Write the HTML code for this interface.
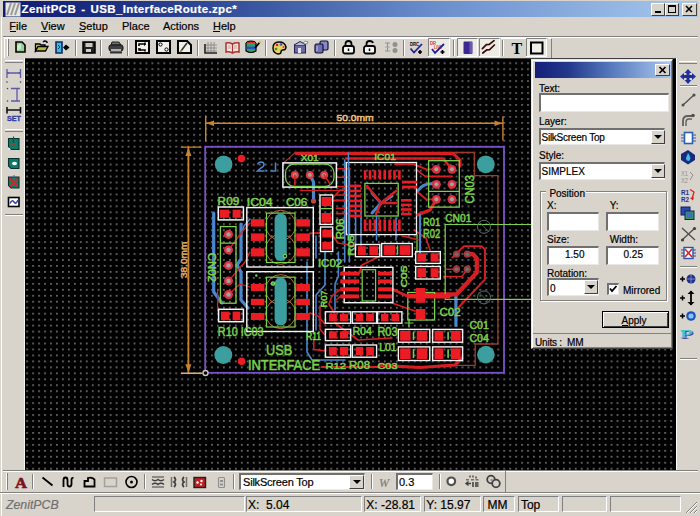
<!DOCTYPE html><html><head><meta charset="utf-8"><style>
*{margin:0;padding:0;box-sizing:border-box}
html,body{width:700px;height:516px;overflow:hidden;background:#d8d4cb;font-family:"Liberation Sans",sans-serif;position:relative}
.a{position:absolute}
.t{position:absolute;white-space:pre;line-height:1;-webkit-text-stroke:0.2px currentColor}
.sunk{position:absolute;border-top:1px solid #808080;border-left:1px solid #808080;border-bottom:1px solid #fff;border-right:1px solid #fff}
.inp{position:absolute;background:#fff;border-top:2px solid #707070;border-left:2px solid #707070;border-bottom:1px solid #e8e8e8;border-right:1px solid #e8e8e8}
.sep{position:absolute;width:2px;border-left:1px solid #808080;border-right:1px solid #fff}
.hsep{position:absolute;height:2px;border-top:1px solid #808080;border-bottom:1px solid #fff}
.dd{position:absolute;background:#d8d4cb;border-top:1px solid #fff;border-left:1px solid #fff;border-right:1px solid #404040;border-bottom:1px solid #404040}
.dd:after{content:"";position:absolute;left:50%;top:50%;margin-left:-4px;margin-top:-2px;border-left:4px solid transparent;border-right:4px solid transparent;border-top:4px solid #000}
.pressed{position:absolute;background:#e8e6e0;border-top:1px solid #808080;border-left:1px solid #808080;border-bottom:1px solid #fff;border-right:1px solid #fff}
</style></head><body>

<div class="a" style="left:3px;top:1px;width:695px;height:16px;background:linear-gradient(90deg,#101c74 0%,#1c2e82 15%,#3c5aa2 38%,#6a8ecc 62%,#a6c8ee 100%)"></div>
<svg class="a" style="left:5px;top:2px" width="16" height="15" viewBox="0 0 16 15"><rect x="0.5" y="0.5" width="15" height="14" fill="#e8e8e0"/><path d="M2 13 L6 1 M6 13 L10 1 M10 13 L14 1" stroke="#9a9a9a" stroke-width="2"/></svg>
<div class="t" style="left:21.5px;top:3px;font:bold 11.5px 'Liberation Sans';color:#fff;letter-spacing:0.37px;word-spacing:1.5px">ZenitPCB - USB_InterfaceRoute.zpc*</div>
<div class="a" style="left:651px;top:3px;width:14px;height:13px;background:#d8d4cb;border-top:1px solid #fff;border-left:1px solid #fff;border-right:1px solid #404040;border-bottom:1px solid #404040"></div>
<div class="a" style="left:665px;top:3px;width:14px;height:13px;background:#d8d4cb;border-top:1px solid #fff;border-left:1px solid #fff;border-right:1px solid #404040;border-bottom:1px solid #404040"></div>
<div class="a" style="left:682px;top:3px;width:15px;height:13px;background:#d8d4cb;border-top:1px solid #fff;border-left:1px solid #fff;border-right:1px solid #404040;border-bottom:1px solid #404040"></div>
<svg class="a" style="left:651px;top:3px" width="47" height="13"><rect x="4" y="8" width="6" height="2" fill="#000"/><rect x="17.5" y="2.5" width="7" height="7" fill="none" stroke="#000" stroke-width="1"/><rect x="17" y="2" width="8" height="2" fill="#000"/><path d="M35 3 L41 9 M41 3 L35 9" stroke="#000" stroke-width="1.6"/></svg>
<div class="t" style="left:9.3px;top:20.7px;font-size:11px;color:#000">File</div>
<div class="t" style="left:41px;top:20.7px;font-size:11px;color:#000">View</div>
<div class="t" style="left:79px;top:20.7px;font-size:11px;color:#000">Setup</div>
<div class="t" style="left:122px;top:20.7px;font-size:11px;color:#000">Place</div>
<div class="t" style="left:163px;top:20.7px;font-size:11px;color:#000">Actions</div>
<div class="t" style="left:213px;top:20.7px;font-size:11px;color:#000">Help</div>
<div class="a" style="left:9.5px;top:30.5px;width:6px;height:1px;background:#000"></div>
<div class="a" style="left:41px;top:30.5px;width:7px;height:1px;background:#000"></div>
<div class="a" style="left:79px;top:30.5px;width:6px;height:1px;background:#000"></div>
<div class="a" style="left:213px;top:30.5px;width:7px;height:1px;background:#000"></div>
<div class="hsep" style="left:3px;top:36px;width:695px"></div>
<div class="a" style="left:4px;top:38px;width:548px;height:20px;border-left:1px solid #fff;border-top:1px solid #fff;border-right:1px solid #808080"></div>
<div class="a" style="left:7px;top:39px;width:2px;height:17px;border-left:1px solid #fff;border-right:1px solid #808080"></div>
<div class="sep" style="left:74.5px;top:40px;height:16px"></div>
<div class="sep" style="left:100px;top:40px;height:16px"></div>
<div class="sep" style="left:127.30000000000001px;top:40px;height:16px"></div>
<div class="sep" style="left:196.8px;top:40px;height:16px"></div>
<div class="sep" style="left:265px;top:40px;height:16px"></div>
<div class="sep" style="left:333.9px;top:40px;height:16px"></div>
<div class="sep" style="left:402.5px;top:40px;height:16px"></div>
<div class="sep" style="left:452.7px;top:40px;height:16px"></div>
<div class="sep" style="left:501.9px;top:40px;height:16px"></div>
<div class="a" style="left:25px;top:58px;width:651px;height:412px;background:#000;overflow:hidden">
<svg width="651" height="412" style="position:absolute;left:0;top:0">
<defs><pattern id="g" patternUnits="userSpaceOnUse" x="7.200" y="4.300" width="5.963" height="5.963"><rect x="0.15" y="0.15" width="1.5" height="1.5" fill="#959595"/></pattern></defs>
<rect x="0" y="0" width="651" height="412" fill="url(#g)"/>
</svg></div>
<div class="a" style="left:25px;top:58px;width:651px;height:1px;background:#404040"></div>
<div class="a" style="left:25px;top:58px;width:651px;height:412px;overflow:hidden"><div style="position:absolute;left:-25px;top:-58px"><svg class="a" style="left:0;top:0" width="700" height="516" viewBox="0 0 700 516"><path d="M205.7 123.3 L502.9 123.3" fill="none" stroke="#c8842c" stroke-width="1.6" stroke-linejoin="round" stroke-linecap="round" /><path d="M205.7 116.0 L205.7 141.0" fill="none" stroke="#c8842c" stroke-width="1.4" stroke-linejoin="round" stroke-linecap="round" /><path d="M502.9 117.0 L502.9 140.0" fill="none" stroke="#c8842c" stroke-width="1.4" stroke-linejoin="round" stroke-linecap="round" /><path d="M206 123.3 L214 120.5 L214 126.1 Z" fill="#c8842c"/><path d="M502.5 123.3 L494.5 120.5 L494.5 126.1 Z" fill="#c8842c"/><text x="336.5" y="121.0" font-family="Liberation Sans" font-size="9.7" fill="#e8c080" stroke="#e8c080" stroke-width="0.5" textLength="37.0" lengthAdjust="spacingAndGlyphs">50.0mm</text><path d="M188.4 147.2 L188.4 373.0" fill="none" stroke="#c8842c" stroke-width="1.8" stroke-linejoin="round" stroke-linecap="round" /><path d="M181.4 147.1 L201.0 147.1" fill="none" stroke="#c8842c" stroke-width="1.4" stroke-linejoin="round" stroke-linecap="round" /><path d="M181.4 373.2 L202.0 373.2" fill="none" stroke="#e0b070" stroke-width="1.4" stroke-linejoin="round" stroke-linecap="round" /><path d="M188.4 147.5 L185.4 156 L191.4 156 Z" fill="#c8842c"/><path d="M188.4 372.8 L185.4 364.3 L191.4 364.3 Z" fill="#c8842c"/><text transform="translate(186.5 278.1) rotate(-90)" x="0" y="0" font-family="Liberation Sans" font-size="9.0" fill="#e0a860" stroke="#e0a860" stroke-width="0.5" textLength="36.4" lengthAdjust="spacingAndGlyphs">38.0mm</text><rect x="205.2" y="146.8" width="298.8" height="226.0" fill="none" stroke="#7a52c8" stroke-width="1.8" /><circle cx="205.5" cy="373.0" r="3.2" fill="#c8c8c0"/><circle cx="205.5" cy="373.0" r="1.8" fill="#000"/><path d="M296.0 152.5 L474.3 152.5 L474.3 175.7 L497.9 175.7 L497.9 344.0 L475.2 344.0 L475.2 365.3 L440.0 365.3" fill="none" stroke="#9a3c2c" stroke-width="1.3" stroke-linejoin="round" stroke-linecap="round" /><path d="M283.6 162.9 L295.7 152.1" fill="none" stroke="#9a3c2c" stroke-width="1.2" stroke-linejoin="round" stroke-linecap="round" /><circle cx="223.6" cy="164.3" r="8.8" fill="#3c9e9e"/><circle cx="485.8" cy="164.3" r="8.9" fill="#3c9e9e"/><circle cx="223.3" cy="355.0" r="9.0" fill="#3c9e9e"/><circle cx="485.9" cy="354.6" r="8.8" fill="#3c9e9e"/><circle cx="241.4" cy="158.6" r="3.8" fill="#ec1c24"/><circle cx="241.6" cy="361.2" r="3.8" fill="#ec1c24"/><path d="M257.5 164.5 Q258.5 162 261 162 Q264 162 264 164.5 Q264 166.5 261 168 L257.5 171 H264.5 M270.5 171 H275.5 V162.5" fill="none" stroke="#4a86cc" stroke-width="1.5"/><circle cx="266.5" cy="170.8" r="1.0" fill="#4a86cc"/><path d="M213.7 213.0 L213.7 292.0 L222.0 303.0" fill="none" stroke="#4a86cc" stroke-width="3.2" stroke-linejoin="round" stroke-linecap="round" /><path d="M241.0 224.0 L241.0 259.0 L237.0 265.0 L241.0 272.0 L241.0 300.0 L248.0 308.0" fill="none" stroke="#4a86cc" stroke-width="3.2" stroke-linejoin="round" stroke-linecap="round" /><path d="M309.9 174.9 L313.5 182.0 L313.5 201.0" fill="none" stroke="#4a86cc" stroke-width="3.2" stroke-linejoin="round" stroke-linecap="round" /><path d="M307.0 262.0 L307.0 352.0 L312.0 360.0 L345.0 360.0" fill="none" stroke="#4a86cc" stroke-width="1.6" stroke-linejoin="round" stroke-linecap="round" /><path d="M344.7 160.0 L344.7 262.0" fill="none" stroke="#4a86cc" stroke-width="1.6" stroke-linejoin="round" stroke-linecap="round" /><path d="M349.4 168.0 L349.4 262.0" fill="none" stroke="#4a86cc" stroke-width="1.6" stroke-linejoin="round" stroke-linecap="round" /><path d="M355.6 185.0 L355.6 250.0" fill="none" stroke="#4a86cc" stroke-width="1.6" stroke-linejoin="round" stroke-linecap="round" /><path d="M361.0 200.0 L361.0 245.0" fill="none" stroke="#4a86cc" stroke-width="1.6" stroke-linejoin="round" stroke-linecap="round" /><path d="M372.0 193.0 L381.0 203.0 L372.0 213.0" fill="none" stroke="#4a86cc" stroke-width="3" stroke-linejoin="round" stroke-linecap="round" /><path d="M381.0 203.0 L392.0 196.0" fill="none" stroke="#4a86cc" stroke-width="3" stroke-linejoin="round" stroke-linecap="round" /><path d="M396.0 218.0 L396.0 240.0" fill="none" stroke="#4a86cc" stroke-width="1.6" stroke-linejoin="round" stroke-linecap="round" /><path d="M455.9 294.5 L455.9 325.5" fill="none" stroke="#4a86cc" stroke-width="3.2" stroke-linejoin="round" stroke-linecap="round" /><path d="M316.0 236.0 L316.0 258.0" fill="none" stroke="#4a86cc" stroke-width="1.6" stroke-linejoin="round" stroke-linecap="round" /><path d="M325.0 252.0 L325.0 285.0 L316.0 295.0 L316.0 330.0" fill="none" stroke="#4a86cc" stroke-width="1.6" stroke-linejoin="round" stroke-linecap="round" /><path d="M338.4 252.0 L338.4 276.0 L335.0 284.0 L335.0 310.0" fill="none" stroke="#4a86cc" stroke-width="1.6" stroke-linejoin="round" stroke-linecap="round" /><path d="M241.0 235.0 L244.0 226.0 L250.0 219.0" fill="none" stroke="#4a86cc" stroke-width="1.6" stroke-linejoin="round" stroke-linecap="round" /><path d="M296.0 153.4 L452.9 153.4 L460.0 160.0 L460.0 166.0" fill="none" stroke="#d81e22" stroke-width="3.0" stroke-linejoin="round" stroke-linecap="round" /><path d="M395.0 164.2 L413.6 164.2 L426.4 169.4 L436.4 169.3" fill="none" stroke="#d81e22" stroke-width="1.8" stroke-linejoin="round" stroke-linecap="round" /><path d="M416.0 169.4 L425.2 176.4 L452.0 176.4" fill="none" stroke="#d81e22" stroke-width="1.8" stroke-linejoin="round" stroke-linecap="round" /><path d="M417.0 191.5 L426.0 199.3 L436.4 199.3" fill="none" stroke="#d81e22" stroke-width="1.8" stroke-linejoin="round" stroke-linecap="round" /><path d="M418.3 190.3 Q424 182 436.4 184.3" fill="none" stroke="#4a86cc" stroke-width="3" stroke-linecap="round"/><path d="M346.0 158.4 L443.0 158.4 L451.9 169.3" fill="none" stroke="#d81e22" stroke-width="2.5" stroke-linejoin="round" stroke-linecap="round" /><path d="M336.5 168.7 L350.0 168.7" fill="none" stroke="#d81e22" stroke-width="1.6" stroke-linejoin="round" stroke-linecap="round" /><path d="M336.5 177.2 L350.0 177.2" fill="none" stroke="#d81e22" stroke-width="1.6" stroke-linejoin="round" stroke-linecap="round" /><path d="M336.5 186.5 L350.0 186.5" fill="none" stroke="#d81e22" stroke-width="1.6" stroke-linejoin="round" stroke-linecap="round" /><path d="M336.5 195.0 L350.0 195.0" fill="none" stroke="#d81e22" stroke-width="1.6" stroke-linejoin="round" stroke-linecap="round" /><path d="M336.5 208.2 L350.0 208.2" fill="none" stroke="#d81e22" stroke-width="1.6" stroke-linejoin="round" stroke-linecap="round" /><path d="M336.5 213.6 L350.0 213.6" fill="none" stroke="#d81e22" stroke-width="1.6" stroke-linejoin="round" stroke-linecap="round" /><path d="M228.5 249.9 L242.0 232.0 L250.0 223.0" fill="none" stroke="#d81e22" stroke-width="1.3" stroke-linejoin="round" stroke-linecap="round" /><path d="M228.5 280.9 L245.0 262.0 L250.0 252.0" fill="none" stroke="#d81e22" stroke-width="1.3" stroke-linejoin="round" stroke-linecap="round" /><path d="M228.5 294.5 L240.0 284.0 L250.0 287.0" fill="none" stroke="#d81e22" stroke-width="1.3" stroke-linejoin="round" stroke-linecap="round" /><path d="M217.6 290.0 L217.6 311.0" fill="none" stroke="#d81e22" stroke-width="1.3" stroke-linejoin="round" stroke-linecap="round" /><path d="M325.0 206.0 L340.0 190.0 L346.0 190.0" fill="none" stroke="#d81e22" stroke-width="1.6" stroke-linejoin="round" stroke-linecap="round" /><path d="M331.0 233.0 L338.0 243.0 L355.0 246.0" fill="none" stroke="#d81e22" stroke-width="1.6" stroke-linejoin="round" stroke-linecap="round" /><path d="M309.9 233.4 L320.0 233.0" fill="none" stroke="#d81e22" stroke-width="1.8" stroke-linejoin="round" stroke-linecap="round" /><path d="M340.0 289.3 L332.0 296.0 L329.0 304.0 L336.0 316.0" fill="none" stroke="#d81e22" stroke-width="1.6" stroke-linejoin="round" stroke-linecap="round" /><path d="M340.0 296.4 L336.0 300.0" fill="none" stroke="#d81e22" stroke-width="1.4" stroke-linejoin="round" stroke-linecap="round" /><path d="M309.9 313.0 L318.0 316.0 L325.0 324.0" fill="none" stroke="#d81e22" stroke-width="1.6" stroke-linejoin="round" stroke-linecap="round" /><path d="M359.0 273.6 L362.0 265.0 L380.0 256.0" fill="none" stroke="#d81e22" stroke-width="1.8" stroke-linejoin="round" stroke-linecap="round" /><path d="M392.0 289.0 L408.6 296.8 L426.0 296.3 L456.5 294.3" fill="none" stroke="#d81e22" stroke-width="2.6" stroke-linejoin="round" stroke-linecap="round" /><path d="M467.3 254.2 L473.0 254.2 L476.8 258.5 L476.8 272.6 L456.5 294.3 L426.0 294.3" fill="none" stroke="#d81e22" stroke-width="4.2" stroke-linejoin="round" stroke-linecap="round" /><path d="M452.4 257.6 L464.0 246.1 L481.6 246.1 L485.0 249.5 L485.0 279.3 L457.0 309.0" fill="none" stroke="#d81e22" stroke-width="1.9" stroke-linejoin="round" stroke-linecap="round" /><path d="M456.5 269.2 L446.3 269.2" fill="none" stroke="#d81e22" stroke-width="1.5" stroke-linejoin="round" stroke-linecap="round" /><path d="M467.3 269.2 L461.9 276.6 L443.6 276.6" fill="none" stroke="#d81e22" stroke-width="1.5" stroke-linejoin="round" stroke-linecap="round" /><path d="M380.0 365.3 L420.0 367.5 L455.0 365.0 L462.0 358.0" fill="none" stroke="#d81e22" stroke-width="3.2" stroke-linejoin="round" stroke-linecap="round" /><path d="M320.0 305.8 L320.0 329.0 L325.0 335.0" fill="none" stroke="#d81e22" stroke-width="1.5" stroke-linejoin="round" stroke-linecap="round" /><path d="M313.8 339.0 L313.8 349.4 L326.0 351.0" fill="none" stroke="#d81e22" stroke-width="1.5" stroke-linejoin="round" stroke-linecap="round" /><path d="M335.0 323.0 L358.0 340.0 L392.0 338.0" fill="none" stroke="#d81e22" stroke-width="1.6" stroke-linejoin="round" stroke-linecap="round" /><path d="M321.8 367.0 L380.0 367.0" fill="none" stroke="#d81e22" stroke-width="2.2" stroke-linejoin="round" stroke-linecap="round" /><path d="M392.0 303.0 L415.0 311.0" fill="none" stroke="#d81e22" stroke-width="1.6" stroke-linejoin="round" stroke-linecap="round" /><path d="M430.0 250.0 L426.0 238.0 L414.0 230.0" fill="none" stroke="#d81e22" stroke-width="1.6" stroke-linejoin="round" stroke-linecap="round" /><text x="300.7" y="160.7" font-family="Liberation Sans" font-size="9.9" fill="#7cd04c" stroke="#7cd04c" stroke-width="0.5" textLength="17.9" lengthAdjust="spacingAndGlyphs">X01</text><rect x="282.9" y="162.9" width="53.5" height="24.2" fill="none" stroke="#f4f4f4" stroke-width="1.5" /><rect x="285.5" y="164" width="48.5" height="22.5" rx="9" fill="none" stroke="#7cd04c" stroke-width="1.3"/><circle cx="294.9" cy="174.9" r="4.0" fill="#e03840"/><circle cx="294.9" cy="174.9" r="1.9" fill="#9aa4a4"/><circle cx="309.9" cy="174.9" r="4.0" fill="#e03840"/><circle cx="309.9" cy="174.9" r="1.9" fill="#9aa4a4"/><circle cx="324.1" cy="174.9" r="4.0" fill="#e03840"/><circle cx="324.1" cy="174.9" r="1.9" fill="#9aa4a4"/><path d="M294.9 174.9 L294.9 185.0" fill="none" stroke="#d81e22" stroke-width="1.5" stroke-linejoin="round" stroke-linecap="round" /><path d="M324.1 174.9 L330.0 184.0" fill="none" stroke="#d81e22" stroke-width="1.5" stroke-linejoin="round" stroke-linecap="round" /><path d="M300.0 190.5 L350.0 190.5" fill="none" stroke="#d81e22" stroke-width="1.2" stroke-linejoin="round" stroke-linecap="round" /><path d="M332.0 200.6 L350.0 200.6" fill="none" stroke="#d81e22" stroke-width="2" stroke-linejoin="round" stroke-linecap="round" /><circle cx="313.5" cy="201.0" r="2.6" fill="#d04040"/><text x="374.2" y="160.2" font-family="Liberation Sans" font-size="9.7" fill="#7cd04c" stroke="#7cd04c" stroke-width="0.5" textLength="21.7" lengthAdjust="spacingAndGlyphs">IC01</text><rect x="346.3" y="162.5" width="70.2" height="72.1" fill="none" stroke="#f4f4f4" stroke-width="1.3" /><rect x="364.9" y="183.4" width="33.3" height="32.6" fill="none" stroke="#7cd04c" stroke-width="1.3" /><rect x="363.8" y="170.2" width="2.6" height="9.3" fill="#ec1c24"/><rect x="363.8" y="219.5" width="2.6" height="11.5" fill="#ec1c24"/><rect x="368.7" y="170.2" width="2.6" height="9.3" fill="#ec1c24"/><rect x="368.7" y="219.5" width="2.6" height="11.5" fill="#ec1c24"/><rect x="373.6" y="170.2" width="2.6" height="9.3" fill="#ec1c24"/><rect x="373.6" y="219.5" width="2.6" height="11.5" fill="#ec1c24"/><rect x="378.5" y="170.2" width="2.6" height="9.3" fill="#ec1c24"/><rect x="378.5" y="219.5" width="2.6" height="11.5" fill="#ec1c24"/><rect x="383.4" y="170.2" width="2.6" height="9.3" fill="#ec1c24"/><rect x="383.4" y="219.5" width="2.6" height="11.5" fill="#ec1c24"/><rect x="388.3" y="170.2" width="2.6" height="9.3" fill="#ec1c24"/><rect x="388.3" y="219.5" width="2.6" height="11.5" fill="#ec1c24"/><rect x="393.2" y="170.2" width="2.6" height="9.3" fill="#ec1c24"/><rect x="393.2" y="219.5" width="2.6" height="11.5" fill="#ec1c24"/><rect x="398.1" y="170.2" width="2.6" height="9.3" fill="#ec1c24"/><rect x="398.1" y="219.5" width="2.6" height="11.5" fill="#ec1c24"/><rect x="350.0" y="184.6" width="11.0" height="2.6" fill="#ec1c24"/><rect x="350.0" y="189.6" width="11.0" height="2.6" fill="#ec1c24"/><rect x="350.0" y="194.6" width="11.0" height="2.6" fill="#ec1c24"/><rect x="350.0" y="199.6" width="11.0" height="2.6" fill="#ec1c24"/><rect x="350.0" y="204.6" width="11.0" height="2.6" fill="#ec1c24"/><rect x="350.0" y="209.6" width="11.0" height="2.6" fill="#ec1c24"/><rect x="350.0" y="214.6" width="11.0" height="2.6" fill="#ec1c24"/><rect x="402.0" y="180.7" width="15.0" height="2.7" fill="#ec1c24"/><rect x="402.0" y="185.6" width="15.0" height="2.8" fill="#ec1c24"/><rect x="401.0" y="199.0" width="10.7" height="2.6" fill="#ec1c24"/><rect x="401.0" y="203.6" width="10.7" height="2.6" fill="#ec1c24"/><rect x="401.0" y="208.2" width="10.7" height="2.6" fill="#ec1c24"/><rect x="401.0" y="212.8" width="10.7" height="2.6" fill="#ec1c24"/><path d="M348.4 153.0 L348.4 240.0" fill="none" stroke="#4a86cc" stroke-width="1.6" stroke-linejoin="round" stroke-linecap="round" /><path d="M376.5 215.0 L376.5 240.0" fill="none" stroke="#4a86cc" stroke-width="1.6" stroke-linejoin="round" stroke-linecap="round" /><path d="M418.0 214.8 L430.0 210.0 L436.4 199.3" fill="none" stroke="#d81e22" stroke-width="3.2" stroke-linejoin="round" stroke-linecap="round" /><path d="M420.0 215.0 L420.0 255.0" fill="none" stroke="#4a86cc" stroke-width="2.2" stroke-linejoin="round" stroke-linecap="round" /><path d="M417.0 235.0 L417.0 252.0" fill="none" stroke="#7cd04c" stroke-width="1.3" stroke-linejoin="round" stroke-linecap="round" /><path d="M402.0 235.7 L418.0 239.8" fill="none" stroke="#d81e22" stroke-width="1.5" stroke-linejoin="round" stroke-linecap="round" /><path d="M367.0 186.0 L381.0 203.0 L396.0 191.0" fill="none" stroke="#d81e22" stroke-width="2.4" stroke-linejoin="round" stroke-linecap="round" /><path d="M381.0 203.0 L396.0 203.0" fill="none" stroke="#d81e22" stroke-width="2.4" stroke-linejoin="round" stroke-linecap="round" /><path d="M381.0 203.0 L376.0 214.0" fill="none" stroke="#d81e22" stroke-width="2.4" stroke-linejoin="round" stroke-linecap="round" /><rect x="428.6" y="160.7" width="30.7" height="46.4" fill="none" stroke="#7cd04c" stroke-width="1.3" /><path d="M428.6 191.4 L459.3 191.4" fill="none" stroke="#7cd04c" stroke-width="1.3" stroke-linejoin="round" stroke-linecap="round" /><circle cx="436.4" cy="169.3" r="4.4" fill="#e03040"/><circle cx="436.4" cy="169.3" r="2.0" fill="#9aa4a4"/><circle cx="436.4" cy="184.3" r="4.4" fill="#e03040"/><circle cx="436.4" cy="184.3" r="2.0" fill="#9aa4a4"/><circle cx="436.4" cy="199.3" r="4.4" fill="#e03040"/><circle cx="436.4" cy="199.3" r="2.0" fill="#9aa4a4"/><circle cx="451.9" cy="169.3" r="4.4" fill="#e03040"/><circle cx="451.9" cy="169.3" r="2.0" fill="#9aa4a4"/><circle cx="451.9" cy="184.3" r="4.4" fill="#e03040"/><circle cx="451.9" cy="184.3" r="2.0" fill="#9aa4a4"/><circle cx="451.9" cy="199.3" r="4.4" fill="#e03040"/><circle cx="451.9" cy="199.3" r="2.0" fill="#9aa4a4"/><text transform="translate(473.6 203.6) rotate(-90)" x="0" y="0" font-family="Liberation Sans" font-size="11.9" fill="#7cd04c" stroke="#7cd04c" stroke-width="0.5" textLength="28.6" lengthAdjust="spacingAndGlyphs">CN03</text><text x="445.2" y="222.0" font-family="Liberation Sans" font-size="10.8" fill="#7cd04c" stroke="#7cd04c" stroke-width="0.5" textLength="26.2" lengthAdjust="spacingAndGlyphs">CN01</text><path d="M540.0 224.5 L445.2 224.5 L445.2 299.4 L540.0 299.4" fill="none" stroke="#7cd04c" stroke-width="1.2" stroke-linejoin="round" stroke-linecap="round" /><circle cx="484" cy="226.8" r="6.5" fill="none" stroke="#5a6e6e" stroke-width="1"/><path d="M479.0 221.8 L489.0 231.8" fill="none" stroke="#5a6e6e" stroke-width="0.8" stroke-linejoin="round" stroke-linecap="round" /><circle cx="484" cy="297.4" r="6.5" fill="none" stroke="#5a6e6e" stroke-width="1"/><path d="M479.0 292.4 L489.0 302.4" fill="none" stroke="#5a6e6e" stroke-width="0.8" stroke-linejoin="round" stroke-linecap="round" /><circle cx="456.5" cy="254.2" r="3.6" fill="#a03838"/><circle cx="456.5" cy="254.2" r="1.8" fill="#6a7070"/><circle cx="456.5" cy="269.2" r="3.6" fill="#a03838"/><circle cx="456.5" cy="269.2" r="1.8" fill="#6a7070"/><circle cx="467.3" cy="254.2" r="3.6" fill="#a03838"/><circle cx="467.3" cy="254.2" r="1.8" fill="#6a7070"/><circle cx="467.3" cy="269.2" r="3.6" fill="#a03838"/><circle cx="467.3" cy="269.2" r="1.8" fill="#6a7070"/><text x="423.0" y="225.9" font-family="Liberation Sans" font-size="11.0" fill="#7cd04c" stroke="#7cd04c" stroke-width="0.5" textLength="17.3" lengthAdjust="spacingAndGlyphs">R01</text><text x="423.0" y="238.4" font-family="Liberation Sans" font-size="12.1" fill="#7cd04c" stroke="#7cd04c" stroke-width="0.5" textLength="17.3" lengthAdjust="spacingAndGlyphs">R02</text><rect x="320.0" y="195.0" width="12.7" height="29.4" fill="none" stroke="#f4f4f4" stroke-width="1.4" /><rect x="321.5" y="197.0" width="10.0" height="9.0" fill="#ec1c24"/><rect x="321.5" y="213.0" width="10.0" height="9.7" fill="#ec1c24"/><path d="M321.0 208.7 L332.0 208.7" fill="none" stroke="#7cd04c" stroke-width="1.2" stroke-linejoin="round" stroke-linecap="round" /><rect x="320.5" y="227.0" width="12.2" height="24.5" fill="none" stroke="#f4f4f4" stroke-width="1.4" /><rect x="322.2" y="229.7" width="9.6" height="7.8" fill="#ec1c24"/><rect x="322.2" y="241.9" width="9.6" height="7.8" fill="#ec1c24"/><text transform="translate(344.0 239.3) rotate(-90)" x="0" y="0" font-family="Liberation Sans" font-size="11.1" fill="#7cd04c" stroke="#7cd04c" stroke-width="0.5" textLength="21.0" lengthAdjust="spacingAndGlyphs">R06</text><text x="317.9" y="267.2" font-family="Liberation Sans" font-size="11.0" fill="#7cd04c" stroke="#7cd04c" stroke-width="0.5" textLength="24.4" lengthAdjust="spacingAndGlyphs">IC02</text><text transform="translate(353.6 255.8) rotate(-90)" x="0" y="0" font-family="Liberation Sans" font-size="8.5" fill="#7cd04c" stroke="#7cd04c" stroke-width="0.5" textLength="20.9" lengthAdjust="spacingAndGlyphs">R05</text><text transform="translate(406.5 287.5) rotate(-90)" x="0" y="0" font-family="Liberation Sans" font-size="8.3" fill="#7cd04c" stroke="#7cd04c" stroke-width="0.5" textLength="21.8" lengthAdjust="spacingAndGlyphs">C05</text><rect x="355.4" y="244.5" width="24.4" height="12.2" fill="none" stroke="#f4f4f4" stroke-width="1.4" /><rect x="358.0" y="246.2" width="7.8" height="8.8" fill="#ec1c24"/><rect x="369.3" y="246.2" width="8.7" height="8.8" fill="#ec1c24"/><rect x="381.6" y="243.5" width="30.7" height="13.1" fill="none" stroke="#f4f4f4" stroke-width="1.4" /><rect x="383.6" y="245.2" width="11.9" height="9.7" fill="#ec1c24"/><rect x="399.5" y="245.2" width="11.0" height="9.7" fill="#ec1c24"/><path d="M397.5 246.0 L397.5 254.0" fill="none" stroke="#7cd04c" stroke-width="1.5" stroke-linejoin="round" stroke-linecap="round" /><rect x="415.7" y="251.6" width="24.6" height="11.8" fill="none" stroke="#f4f4f4" stroke-width="1.4" /><rect x="417.3" y="253.3" width="8.7" height="8.4" fill="#ec1c24"/><rect x="430.6" y="253.3" width="7.9" height="8.4" fill="#ec1c24"/><rect x="415.7" y="266.5" width="24.6" height="12.5" fill="none" stroke="#f4f4f4" stroke-width="1.4" /><rect x="417.3" y="268.2" width="8.7" height="9.1" fill="#ec1c24"/><rect x="430.6" y="268.2" width="7.9" height="9.1" fill="#ec1c24"/><rect x="344.2" y="267.3" width="48.7" height="35.4" fill="none" stroke="#f4f4f4" stroke-width="1.4" /><rect x="340.2" y="271.6" width="18.8" height="4.0" fill="#ec1c24"/><rect x="378.0" y="271.6" width="14.0" height="4.0" fill="#ec1c24"/><rect x="340.2" y="279.4" width="18.8" height="4.0" fill="#ec1c24"/><rect x="378.0" y="279.4" width="14.0" height="4.0" fill="#ec1c24"/><rect x="340.2" y="287.3" width="18.8" height="4.0" fill="#ec1c24"/><rect x="378.0" y="287.3" width="14.0" height="4.0" fill="#ec1c24"/><rect x="340.2" y="294.4" width="18.8" height="4.0" fill="#ec1c24"/><rect x="378.0" y="294.4" width="14.0" height="4.0" fill="#ec1c24"/><rect x="362.2" y="269.7" width="13.4" height="31.3" fill="none" stroke="#7cd04c" stroke-width="1.2" /><rect x="407.8" y="292.5" width="26.8" height="27.5" fill="none" stroke="#7cd04c" stroke-width="1.3" /><rect x="415.7" y="288.0" width="9.7" height="14.8" fill="#ec1c24"/><rect x="407.0" y="294.0" width="43.0" height="4.5" fill="#ec1c24"/><rect x="415.7" y="309.0" width="9.7" height="10.4" fill="#ec1c24"/><path d="M405.0 323.0 L413.0 323.0" fill="none" stroke="#7cd04c" stroke-width="1.2" stroke-linejoin="round" stroke-linecap="round" /><path d="M409.0 319.0 L409.0 327.0" fill="none" stroke="#7cd04c" stroke-width="1.2" stroke-linejoin="round" stroke-linecap="round" /><text x="439.4" y="315.9" font-family="Liberation Sans" font-size="11.0" fill="#7cd04c" stroke="#7cd04c" stroke-width="0.5" textLength="21.3" lengthAdjust="spacingAndGlyphs">C02</text><rect x="325.4" y="311.8" width="25.3" height="11.4" fill="none" stroke="#f4f4f4" stroke-width="1.4" /><rect x="328.9" y="313.8" width="7.9" height="7.4" fill="#ec1c24"/><rect x="339.8" y="313.8" width="8.2" height="7.4" fill="#ec1c24"/><rect x="352.4" y="311.8" width="24.2" height="11.4" fill="none" stroke="#f4f4f4" stroke-width="1.4" /><rect x="355.9" y="313.8" width="7.4" height="7.4" fill="#ec1c24"/><rect x="366.2" y="313.8" width="7.7" height="7.4" fill="#ec1c24"/><rect x="377.5" y="311.8" width="24.4" height="11.4" fill="none" stroke="#f4f4f4" stroke-width="1.4" /><rect x="381.0" y="313.8" width="7.5" height="7.4" fill="#ec1c24"/><rect x="391.4" y="313.8" width="7.8" height="7.4" fill="#ec1c24"/><rect x="325.4" y="329.3" width="25.3" height="11.3" fill="none" stroke="#f4f4f4" stroke-width="1.4" /><rect x="328.9" y="331.3" width="7.9" height="7.3" fill="#ec1c24"/><rect x="339.8" y="331.3" width="8.2" height="7.3" fill="#ec1c24"/><rect x="325.4" y="345.0" width="25.3" height="12.2" fill="none" stroke="#f4f4f4" stroke-width="1.4" /><rect x="328.9" y="347.0" width="7.9" height="8.2" fill="#ec1c24"/><rect x="339.8" y="347.0" width="8.2" height="8.2" fill="#ec1c24"/><rect x="352.4" y="345.0" width="24.2" height="12.2" fill="none" stroke="#f4f4f4" stroke-width="1.4" /><rect x="355.9" y="347.0" width="7.4" height="8.2" fill="#ec1c24"/><rect x="366.2" y="347.0" width="7.7" height="8.2" fill="#ec1c24"/><text x="306.0" y="339.7" font-family="Liberation Sans" font-size="10.8" fill="#7cd04c" stroke="#7cd04c" stroke-width="0.5" textLength="15.0" lengthAdjust="spacingAndGlyphs">R11</text><text transform="translate(327.0 307.6) rotate(-90)" x="0" y="0" font-family="Liberation Sans" font-size="9.0" fill="#7cd04c" stroke="#7cd04c" stroke-width="0.5" textLength="17.1" lengthAdjust="spacingAndGlyphs">R07</text><text x="352.4" y="335.4" font-family="Liberation Sans" font-size="11.0" fill="#7cd04c" stroke="#7cd04c" stroke-width="0.5" textLength="19.6" lengthAdjust="spacingAndGlyphs">R04</text><text x="377.5" y="336.2" font-family="Liberation Sans" font-size="12.1" fill="#7cd04c" stroke="#7cd04c" stroke-width="0.5" textLength="20.0" lengthAdjust="spacingAndGlyphs">R03</text><text x="379.2" y="351.0" font-family="Liberation Sans" font-size="10.8" fill="#7cd04c" stroke="#7cd04c" stroke-width="0.5" textLength="17.4" lengthAdjust="spacingAndGlyphs">L01</text><text x="325.4" y="368.5" font-family="Liberation Sans" font-size="9.7" fill="#7cd04c" stroke="#7cd04c" stroke-width="0.5" textLength="20.6" lengthAdjust="spacingAndGlyphs">R12</text><text x="349.0" y="368.5" font-family="Liberation Sans" font-size="10.8" fill="#7cd04c" stroke="#7cd04c" stroke-width="0.5" textLength="21.0" lengthAdjust="spacingAndGlyphs">R08</text><text x="377.5" y="369.4" font-family="Liberation Sans" font-size="8.5" fill="#7cd04c" stroke="#7cd04c" stroke-width="0.5" textLength="20.0" lengthAdjust="spacingAndGlyphs">C03</text><rect x="398.4" y="329.4" width="31.4" height="12.8" fill="none" stroke="#f4f4f4" stroke-width="1.4" /><rect x="400.1" y="330.9" width="10.5" height="9.8" fill="#ec1c24"/><rect x="416.7" y="330.9" width="10.5" height="9.8" fill="#ec1c24"/><path d="M413.5 332.4 L413.5 339.2" fill="none" stroke="#7cd04c" stroke-width="1.6" stroke-linejoin="round" stroke-linecap="round" /><rect x="432.6" y="329.4" width="30.0" height="12.8" fill="none" stroke="#f4f4f4" stroke-width="1.4" /><rect x="434.5" y="330.9" width="8.8" height="9.8" fill="#ec1c24"/><rect x="451.0" y="330.9" width="9.7" height="9.8" fill="#ec1c24"/><path d="M448.1 332.4 L448.1 339.2" fill="none" stroke="#7cd04c" stroke-width="1.6" stroke-linejoin="round" stroke-linecap="round" /><rect x="398.4" y="346.9" width="31.4" height="13.6" fill="none" stroke="#f4f4f4" stroke-width="1.4" /><rect x="400.1" y="348.4" width="10.5" height="10.6" fill="#ec1c24"/><rect x="416.7" y="348.4" width="10.5" height="10.6" fill="#ec1c24"/><path d="M413.5 349.9 L413.5 357.5" fill="none" stroke="#7cd04c" stroke-width="1.6" stroke-linejoin="round" stroke-linecap="round" /><rect x="432.6" y="346.9" width="30.0" height="13.6" fill="none" stroke="#f4f4f4" stroke-width="1.4" /><rect x="434.5" y="348.4" width="8.8" height="10.6" fill="#ec1c24"/><rect x="451.0" y="348.4" width="9.7" height="10.6" fill="#ec1c24"/><path d="M448.1 349.9 L448.1 357.5" fill="none" stroke="#7cd04c" stroke-width="1.6" stroke-linejoin="round" stroke-linecap="round" /><text x="469.4" y="329.4" font-family="Liberation Sans" font-size="10.7" fill="#7cd04c" stroke="#7cd04c" stroke-width="0.5" textLength="19.4" lengthAdjust="spacingAndGlyphs">C01</text><text x="469.4" y="342.0" font-family="Liberation Sans" font-size="10.7" fill="#7cd04c" stroke="#7cd04c" stroke-width="0.5" textLength="19.4" lengthAdjust="spacingAndGlyphs">C04</text><rect x="246.8" y="207.6" width="66.5" height="59.4" fill="none" stroke="#f4f4f4" stroke-width="1.4" /><rect x="250.9" y="219.2" width="13.5" height="7.4" fill="#ec1c24"/><rect x="296.3" y="219.2" width="13.6" height="7.4" fill="#ec1c24"/><rect x="250.9" y="233.4" width="13.5" height="7.5" fill="#ec1c24"/><rect x="296.3" y="233.4" width="13.6" height="7.5" fill="#ec1c24"/><rect x="250.9" y="248.3" width="13.5" height="8.2" fill="#ec1c24"/><rect x="296.3" y="248.3" width="13.6" height="8.2" fill="#ec1c24"/><circle cx="280.7" cy="225.3" r="15" fill="none" stroke="#b86a30" stroke-width="1"/><circle cx="280.7" cy="249.3" r="15" fill="none" stroke="#b86a30" stroke-width="1"/><rect x="266.5" y="213.1" width="28.5" height="49.4" fill="none" stroke="#7cd04c" stroke-width="1.2" /><rect x="274.6" y="213.6" width="12.2" height="47.4" rx="6" fill="#3c9e9e"/><rect x="246.8" y="271.7" width="66.5" height="59.8" fill="none" stroke="#f4f4f4" stroke-width="1.4" /><rect x="250.9" y="284.0" width="13.5" height="7.0" fill="#ec1c24"/><rect x="296.3" y="284.0" width="13.6" height="7.0" fill="#ec1c24"/><rect x="250.9" y="298.8" width="13.5" height="6.2" fill="#ec1c24"/><rect x="296.3" y="298.8" width="13.6" height="6.2" fill="#ec1c24"/><rect x="250.9" y="313.0" width="13.5" height="7.0" fill="#ec1c24"/><rect x="296.3" y="313.0" width="13.6" height="7.0" fill="#ec1c24"/><circle cx="280.7" cy="289.6" r="15" fill="none" stroke="#b86a30" stroke-width="1"/><circle cx="280.7" cy="313.6" r="15" fill="none" stroke="#b86a30" stroke-width="1"/><rect x="266.5" y="277.2" width="28.5" height="49.8" fill="none" stroke="#7cd04c" stroke-width="1.2" /><rect x="274.6" y="277.7" width="12.2" height="47.8" rx="6" fill="#3c9e9e"/><text x="246.8" y="206.3" font-family="Liberation Sans" font-size="10.4" fill="#7cd04c" stroke="#7cd04c" stroke-width="0.5" textLength="25.8" lengthAdjust="spacingAndGlyphs">IC04</text><text x="286.0" y="205.5" font-family="Liberation Sans" font-size="10.4" fill="#7cd04c" stroke="#7cd04c" stroke-width="0.5" textLength="21.2" lengthAdjust="spacingAndGlyphs">C06</text><circle cx="285.0" cy="256.0" r="2.2" fill="#7cd04c"/><circle cx="285.0" cy="256.0" r="1.0" fill="#000"/><circle cx="273.0" cy="283.6" r="2.4" fill="#7cd04c"/><circle cx="273.0" cy="283.6" r="1.1" fill="#3c9e9e"/><circle cx="256.3" cy="275.5" r="1.2" fill="#7cd04c"/><rect x="220.4" y="226.6" width="15.6" height="76.6" fill="none" stroke="#7cd04c" stroke-width="1.3" /><path d="M220.4 243.1 L236.0 243.1" fill="none" stroke="#7cd04c" stroke-width="1.2" stroke-linejoin="round" stroke-linecap="round" /><circle cx="228.5" cy="234.4" r="4.5" fill="#e03040"/><circle cx="228.5" cy="234.4" r="2.2" fill="#9aa4a4"/><circle cx="228.5" cy="249.9" r="4.5" fill="#e03040"/><circle cx="228.5" cy="249.9" r="2.2" fill="#9aa4a4"/><circle cx="228.5" cy="265.4" r="4.5" fill="#e03040"/><circle cx="228.5" cy="265.4" r="2.2" fill="#9aa4a4"/><circle cx="228.5" cy="280.9" r="4.5" fill="#e03040"/><circle cx="228.5" cy="280.9" r="2.2" fill="#9aa4a4"/><circle cx="228.5" cy="294.5" r="4.5" fill="#e03040"/><circle cx="228.5" cy="294.5" r="2.2" fill="#9aa4a4"/><text transform="translate(208.0 252.7) rotate(90)" x="0" y="0" font-family="Liberation Sans" font-size="11.8" fill="#7cd04c" stroke="#7cd04c" stroke-width="0.5" textLength="29.2" lengthAdjust="spacingAndGlyphs">CN02</text><text x="217.6" y="205.0" font-family="Liberation Sans" font-size="10.4" fill="#7cd04c" stroke="#7cd04c" stroke-width="0.5" textLength="21.7" lengthAdjust="spacingAndGlyphs">R09</text><rect x="218.3" y="207.0" width="25.1" height="12.9" fill="none" stroke="#f4f4f4" stroke-width="1.5" /><rect x="219.7" y="209.7" width="9.5" height="8.1" fill="#ec1c24"/><rect x="232.6" y="209.7" width="8.1" height="8.1" fill="#ec1c24"/><rect x="218.6" y="309.3" width="24.8" height="12.4" fill="none" stroke="#f4f4f4" stroke-width="1.5" /><rect x="221.0" y="311.6" width="8.5" height="8.6" fill="#ec1c24"/><rect x="232.6" y="311.6" width="7.7" height="8.6" fill="#ec1c24"/><text x="217.8" y="335.7" font-family="Liberation Sans" font-size="12.1" fill="#7cd04c" stroke="#7cd04c" stroke-width="0.5" textLength="45.8" lengthAdjust="spacingAndGlyphs">R10 IC03</text><text x="266.0" y="355.0" font-family="Liberation Sans" font-size="13.9" fill="#7cd04c" stroke="#7cd04c" stroke-width="0.5" textLength="26.2" lengthAdjust="spacingAndGlyphs">USB</text><text x="248.0" y="369.8" font-family="Liberation Sans" font-size="14.0" fill="#7cd04c" stroke="#7cd04c" stroke-width="0.5" textLength="72.0" lengthAdjust="spacingAndGlyphs">INTERFACE</text></svg></div></div>
<div class="a" style="left:3px;top:58px;width:22px;height:412px;background:#d8d4cb"></div>
<div class="a" style="left:24px;top:58px;width:1px;height:412px;background:#f4f4f0"></div>
<div class="a" style="left:1px;top:17px;width:1px;height:499px;background:#fff"></div>
<div class="a" style="left:5px;top:60px;width:18px;height:3px;border-top:1px solid #fff;border-bottom:1px solid #808080"></div>
<div class="a" style="left:5px;top:129px;width:18px;height:3px;border-top:1px solid #fff;border-bottom:1px solid #808080"></div>
<div class="a" style="left:5px;top:214px;width:18px;height:2px;border-top:1px solid #808080;border-bottom:1px solid #fff"></div>
<div class="a" style="left:676px;top:58px;width:1px;height:412px;background:#fff"></div>
<div class="a" style="left:679px;top:61px;width:18px;height:3px;border-top:1px solid #fff;border-bottom:1px solid #808080"></div>
<div class="hsep" style="left:680px;top:85px;width:17px"></div>
<div class="hsep" style="left:680px;top:266px;width:17px"></div>
<div class="hsep" style="left:680px;top:358px;width:17px"></div>
<div class="hsep" style="left:3px;top:470px;width:695px"></div>
<div class="a" style="left:6px;top:473px;width:2px;height:17px;border-left:1px solid #fff;border-right:1px solid #808080"></div>
<div class="sep" style="left:32px;top:474px;height:15px"></div>
<div class="sep" style="left:143.6px;top:474px;height:15px"></div>
<div class="sep" style="left:232.7px;top:474px;height:15px"></div>
<div class="sep" style="left:371.3px;top:474px;height:15px"></div>
<div class="sep" style="left:438.7px;top:474px;height:15px"></div>
<div class="a" style="left:505px;top:471px;width:1px;height:21px;background:#808080"></div>
<div class="inp" style="left:239px;top:473px;width:126px;height:17px"></div>
<div class="t" style="left:243px;top:476.5px;font-size:11px;letter-spacing:-0.2px">SilkScreen Top</div>
<div class="dd" style="left:349px;top:475px;width:15px;height:14px"></div>
<div class="t" style="left:379px;top:476px;font:italic 12px 'Liberation Serif';color:#808080">W</div>
<div class="inp" style="left:396px;top:473px;width:37px;height:17px"></div>
<div class="t" style="left:399px;top:476.5px;font-size:11px">0.3</div>
<div class="hsep" style="left:0px;top:492px;width:700px"></div>
<div class="t" style="left:6px;top:498px;font:italic 12.3px 'Liberation Sans';color:#707070">ZenitPCB</div>
<div class="sunk" style="left:93.5px;top:496px;width:151.1px;height:16px"></div>
<div class="sunk" style="left:246.3px;top:496px;width:115.69999999999999px;height:16px"></div>
<div class="sunk" style="left:363.7px;top:496px;width:57.5px;height:16px"></div>
<div class="sunk" style="left:423.8px;top:496px;width:56.80000000000001px;height:16px"></div>
<div class="sunk" style="left:483.2px;top:496px;width:31.69999999999999px;height:16px"></div>
<div class="sunk" style="left:518.3px;top:496px;width:41.200000000000045px;height:16px"></div>
<div class="sunk" style="left:562px;top:496px;width:45.39999999999998px;height:16px"></div>
<div class="sunk" style="left:610px;top:496px;width:71.20000000000005px;height:16px"></div>
<div class="t" style="left:248px;top:499px;font-size:12px;color:#000">X:  5.04</div>
<div class="t" style="left:366.3px;top:499px;font-size:12px;color:#000">X: -28.81</div>
<div class="t" style="left:426.3px;top:499px;font-size:12px;color:#000">Y: 15.97</div>
<div class="t" style="left:487.4px;top:499px;font-size:12px;color:#000">MM</div>
<div class="t" style="left:520.9px;top:499px;font-size:12px;color:#000">Top</div>
<svg class="a" style="left:684px;top:500px" width="14" height="14"><path d="M2 13 L13 2 M6 13 L13 6 M10 13 L13 10" stroke="#808080" stroke-width="1"/><path d="M3 13 L13 3 M7 13 L13 7 M11 13 L13 11" stroke="#fff" stroke-width="1"/></svg>
<div class="a" style="left:531px;top:59px;width:142px;height:290px;background:#d8d4cb;border-top:1px solid #e8e6e0;border-left:1px solid #e8e6e0;border-right:1px solid #404040;border-bottom:1px solid #404040;box-shadow:inset 1px 1px 0 #fff, inset -1px -1px 0 #808080"></div>
<div class="a" style="left:535px;top:61.5px;width:136px;height:16px;background:linear-gradient(90deg,#141e78 0%,#243a8c 25%,#5478bc 55%,#a8c8ee 100%)"></div>
<div class="a" style="left:655px;top:63.5px;width:15px;height:12px;background:#d8d4cb;border-top:1px solid #fff;border-left:1px solid #fff;border-right:1px solid #404040;border-bottom:1px solid #404040"></div>
<svg class="a" style="left:655px;top:63.5px" width="15" height="12"><path d="M4.5 3 L10.5 9 M10.5 3 L4.5 9" stroke="#000" stroke-width="1.7"/></svg>
<div class="t" style="left:539px;top:84.35px;font-size:10px;color:#000;">Text:</div>
<div class="inp" style="left:539px;top:93px;width:130px;height:19px"></div>
<div class="t" style="left:539px;top:117.15px;font-size:10px;color:#000;">Layer:</div>
<div class="inp" style="left:539px;top:127.5px;width:126px;height:17.5px"></div>
<div class="t" style="left:541.5px;top:132.95px;font-size:10px;color:#000;letter-spacing:-0.25px">SilkScreen Top</div>
<div class="dd" style="left:651px;top:129.5px;width:14px;height:14px"></div>
<div class="t" style="left:539px;top:150.95px;font-size:10px;color:#000;">Style:</div>
<div class="inp" style="left:539px;top:162px;width:126px;height:17.5px"></div>
<div class="t" style="left:541.5px;top:166.95px;font-size:10px;color:#000;">SIMPLEX</div>
<div class="dd" style="left:651px;top:164px;width:14px;height:14px"></div>
<div class="a" style="left:540px;top:191px;width:127px;height:110px;border:1px solid #808080;box-shadow:1px 1px 0 #fff, inset 1px 1px 0 #fff"></div>
<div class="a" style="left:546px;top:186px;width:40px;height:12px;background:#d8d4cb"></div>
<div class="t" style="left:549.4px;top:188.95px;font-size:10px;color:#000;">Position</div>
<div class="t" style="left:547px;top:201.25px;font-size:10px;color:#000;">X:</div>
<div class="t" style="left:609.7px;top:201.25px;font-size:10px;color:#000;">Y:</div>
<div class="inp" style="left:547px;top:212px;width:52px;height:19px"></div>
<div class="inp" style="left:606px;top:212px;width:53px;height:19px"></div>
<div class="t" style="left:547px;top:235.35px;font-size:10px;color:#000;">Size:</div>
<div class="t" style="left:609.7px;top:235.35px;font-size:10px;color:#000;">Width:</div>
<div class="inp" style="left:547px;top:245.5px;width:52px;height:19px"></div>
<div class="inp" style="left:606px;top:245.5px;width:53px;height:19px"></div>
<div class="t" style="left:565px;top:249.95px;font-size:10px;color:#000;">1.50</div>
<div class="t" style="left:623.5px;top:249.95px;font-size:10px;color:#000;">0.25</div>
<div class="t" style="left:547px;top:268.65px;font-size:10px;color:#000;">Rotation:</div>
<div class="inp" style="left:547px;top:278px;width:52px;height:17.5px"></div>
<div class="t" style="left:550px;top:283.95px;font-size:10px;color:#000;">0</div>
<div class="dd" style="left:584px;top:280px;width:14px;height:14px"></div>
<div class="inp" style="left:606.5px;top:282.5px;width:12px;height:12px;background:#fff"></div>
<svg class="a" style="left:606.5px;top:282.5px" width="12" height="12"><path d="M3 5.5 L5 8 L9.5 3" stroke="#000" stroke-width="1.8" fill="none"/></svg>
<div class="t" style="left:623px;top:285.65px;font-size:10px;color:#000;">Mirrored</div>
<div class="a" style="left:601.5px;top:311px;width:67.5px;height:16.5px;border:1px solid #000;box-shadow:inset 1px 1px 0 #fff, inset -1px -1px 0 #404040;background:#d8d4cb"></div>
<div class="t" style="left:621.5px;top:316.45px;font-size:10px;color:#000;">Apply</div>
<div class="a" style="left:622px;top:324.5px;width:6px;height:1px;background:#000"></div>
<div class="a" style="left:533px;top:333px;width:138px;height:14px;border-top:1px solid #808080"></div>
<div class="t" style="left:535px;top:337.55px;font-size:10px;color:#000;letter-spacing:-0.2px">Units :  MM</div>
<svg class="a" style="left:0;top:0;pointer-events:none" width="700" height="516" viewBox="0 0 700 516"><rect x="428.5" y="38.5" width="21" height="18" fill="#ecebe6" stroke="none"/><path d="M428.5 56 L428.5 38.5 L450.5 38.5" fill="none" stroke="#808080" stroke-width="1"/><path d="M449.5 38.5 L449.5 56.5 L428 56.5" fill="none" stroke="#ffffff" stroke-width="1"/><rect x="457.5" y="38.5" width="20" height="18" fill="#ecebe6" stroke="none"/><path d="M457.5 56 L457.5 38.5 L478.5 38.5" fill="none" stroke="#808080" stroke-width="1"/><path d="M477.5 38.5 L477.5 56.5 L457 56.5" fill="none" stroke="#ffffff" stroke-width="1"/><rect x="479.5" y="38.5" width="20" height="18" fill="#ecebe6" stroke="none"/><path d="M479.5 56 L479.5 38.5 L500.5 38.5" fill="none" stroke="#808080" stroke-width="1"/><path d="M499.5 38.5 L499.5 56.5 L479 56.5" fill="none" stroke="#ffffff" stroke-width="1"/><rect x="526.5" y="38.5" width="20" height="18" fill="#ecebe6" stroke="none"/><path d="M526.5 56 L526.5 38.5 L547.5 38.5" fill="none" stroke="#808080" stroke-width="1"/><path d="M546.5 38.5 L546.5 56.5 L526 56.5" fill="none" stroke="#ffffff" stroke-width="1"/><g transform="translate(15 41)"><path d="M1 1 H7 L10 4 V11 H1 Z" fill="#9ad09a" stroke="#000" stroke-width="1.6"/><path d="M3 4 V9 M5 3 V8" stroke="#eaffea" stroke-width="1.2"/></g><g transform="translate(34 40)"><path d="M1.5 4 H6 L7 5 H11 V7 H4 L1.5 11 Z" fill="#d8d860" stroke="#000" stroke-width="1.3"/><path d="M1.5 11 L4 6.5 H14 L11.5 11 Z" fill="#b8b840" stroke="#000" stroke-width="1.3"/><path d="M9 2 Q11 0 13 2" fill="none" stroke="#000" stroke-width="1.2"/><path d="M13 1 L14 3 L12 3 Z" fill="#000"/></g><g transform="translate(55 41)"><path d="M1 1 L7 1 L7 12 L1 12 Z" fill="#40b8d8" stroke="#0a2a6a" stroke-width="1.6"/><path d="M3 4 L5 6 L3 8" stroke="#0a3a7a" stroke-width="1" fill="none"/><path d="M8 6.5 L11 3.5 L14.5 6.5 L11 9.5 Z" fill="#000"/></g><g transform="translate(82 41)"><rect x="1" y="1" width="12" height="11" fill="#202020" stroke="#000" stroke-width="1.5"/><rect x="3.5" y="2" width="7" height="4" fill="#c8c8c0"/><rect x="4" y="8" width="5" height="3" fill="#d0d0c8"/></g><g transform="translate(108 41)"><path d="M4 1 H11 L13 4 H3 Z" fill="#707070" stroke="#202020" stroke-width="1"/><rect x="1" y="4" width="14" height="6" rx="2" fill="#404040" stroke="#101010" stroke-width="1"/><rect x="3" y="8" width="10" height="2.5" fill="#b0b0b0"/><rect x="2" y="10.5" width="12" height="2" fill="#303030"/></g><g transform="translate(135 40)"><rect x="1" y="1" width="13" height="12" fill="#f0f0ea" stroke="#000" stroke-width="2"/><path d="M4 6 V4 H10 V2.5 M4 8 V10 H10 V11.5" stroke="#000" stroke-width="1.6" fill="none"/><path d="M9 3 L11 4.5 L9 6 Z M6 8 L4 9.5 L6 11 Z" fill="#000"/></g><g transform="translate(156 40)"><rect x="1" y="1" width="13" height="12" fill="#f0f0ea" stroke="#000" stroke-width="2"/><circle cx="4.5" cy="4.5" r="1.6" fill="#fff" stroke="#000" stroke-width="1"/><circle cx="10.5" cy="9.5" r="1.6" fill="#fff" stroke="#000" stroke-width="1"/></g><g transform="translate(177 40)"><path d="M1 1 H10 L14 5 V13 H1 Z" fill="#f0f0ea" stroke="#000" stroke-width="2"/><path d="M4 11 L10 3" stroke="#303030" stroke-width="1.6"/><path d="M3 12 L5 10" stroke="#a08020" stroke-width="1.5"/></g><g transform="translate(203 41)"><path d="M2 3 V12 H14" stroke="#202020" stroke-width="1.6" fill="none"/><path d="M5 1 V11 M8 1 V11 M11 1 V11 M3 4 H14 M3 7 H14 M3 10 H14" stroke="#808080" stroke-width="0.8"/></g><g transform="translate(225 41)"><path d="M1 2 Q4 1 7.5 3 Q11 1 14 2 V11 Q11 10 7.5 12 Q4 10 1 11 Z" fill="#f0e8e0" stroke="#b03030" stroke-width="1.5"/><path d="M7.5 3 V12" stroke="#b03030" stroke-width="1.2"/><path d="M3 5 H6 M3 7 H6 M9 5 H12 M9 7 H12" stroke="#c08080" stroke-width="0.7"/></g><g transform="translate(245 40)"><ellipse cx="6" cy="3" rx="5" ry="2" fill="#d03030" stroke="#000" stroke-width="1"/><path d="M1 3 V11 Q6 14 11 11 V3" fill="#30a060" stroke="#000" stroke-width="1.2"/><rect x="1.5" y="6.5" width="9" height="2.5" fill="#3050c0"/><path d="M10 8 L15 2" stroke="#000" stroke-width="1.8"/><circle cx="15" cy="2" r="1.3" fill="#e0c040"/></g><g transform="translate(272 41)"><path d="M7 1 Q13 1 14 6 Q14 9 11 9 Q9 9 9 11 Q9 13 6 13 Q1 12 1 7 Q1 1 7 1 Z" fill="#e8d060" stroke="#000" stroke-width="1.4"/><circle cx="5" cy="4" r="1.3" fill="#d02020"/><circle cx="9" cy="3.5" r="1.3" fill="#2060d0"/><circle cx="4" cy="8" r="1.3" fill="#20a020"/><circle cx="11.5" cy="6" r="1" fill="#c04090"/></g><g transform="translate(293 40)"><rect x="1.5" y="5" width="11" height="8" fill="#6a6aa0" stroke="#202050" stroke-width="1"/><path d="M1 5 L7 1.5 L13 5" fill="#b8b8d8" stroke="#202050" stroke-width="1"/><rect x="5" y="8" width="3" height="5" fill="#e0e0f0"/><path d="M10 3 Q12 0 15 2 Q15 4 12 4 Z" fill="#fff" stroke="#606080" stroke-width="0.8"/></g><g transform="translate(314 40)"><rect x="6" y="1" width="8" height="9" rx="1.5" fill="#8888c8" stroke="#101030" stroke-width="1.2"/><rect x="1" y="4" width="8" height="9" rx="1.5" fill="#7070b0" stroke="#101030" stroke-width="1.2"/><path d="M3 6 V11" stroke="#c0c0f0" stroke-width="1"/></g><g transform="translate(342 40)"><path d="M3.5 6 V4 Q3.5 1 6.5 1 Q9.5 1 9.5 4 V6" fill="none" stroke="#000" stroke-width="1.8"/><rect x="1" y="6" width="11" height="7.5" rx="2" fill="#f4f4f0" stroke="#000" stroke-width="1.8"/><path d="M6.5 8.5 V11" stroke="#000" stroke-width="1.5"/></g><g transform="translate(363 40)"><path d="M3.5 6 V4 Q3.5 1 6.5 1 Q9.5 1 10 3" fill="none" stroke="#000" stroke-width="1.8"/><rect x="1" y="6" width="11" height="7.5" rx="2" fill="#f4f4f0" stroke="#000" stroke-width="1.8"/><path d="M6.5 8.5 V11" stroke="#000" stroke-width="1.5"/></g><g transform="translate(384 41)"><path d="M1 2 H6 M1 10 H6 M3.5 2 V10" stroke="#909090" stroke-width="1"/><path d="M1 6 H6" stroke="#a0a0a0" stroke-width="1"/><circle cx="11" cy="3.5" r="2.5" fill="#909090"/><circle cx="11" cy="9.5" r="2.5" fill="#909090"/></g><g transform="translate(409 41)"><text x="1" y="5" font-family="Liberation Sans" font-weight="bold" font-size="5.5" fill="#000" textLength="9" lengthAdjust="spacingAndGlyphs">DRC</text><path d="M1.5 7.5 L5 11.5 L13 3" stroke="#202090" stroke-width="1.8" fill="none"/><path d="M11 9 V13 M9 11 H13" stroke="#000" stroke-width="1.6"/></g><g transform="translate(430 41)"><text x="0" y="4" font-family="Liberation Sans" font-weight="bold" font-size="4.5" fill="#e03030" textLength="6" lengthAdjust="spacingAndGlyphs">DR</text><text x="4" y="8" font-family="Liberation Sans" font-weight="bold" font-size="4.5" fill="#e03030" textLength="8" lengthAdjust="spacingAndGlyphs">LIVE</text><path d="M2 8 L5 12 L14 3" stroke="#202090" stroke-width="1.8" fill="none"/><path d="M12.5 9 V13 M10.5 11 H14.5" stroke="#000" stroke-width="1.6"/></g><rect x="463.5" y="41.5" width="9" height="12.5" rx="1" fill="#3a2a90"/><rect x="469.5" y="42" width="2.5" height="11.5" fill="#6a5ab0"/><path d="M482.4 48.6 L486.4 44.6 L489.2 44.4 L494 40.6 M482.8 53 L486.8 49.8 L489.6 49.6 L494.4 45" stroke="#3a0a0a" stroke-width="1.7" fill="none" stroke-linecap="round"/><text x="511.5" y="53.5" font-family="Liberation Serif" font-weight="bold" font-size="16" fill="#000">T</text><rect x="531" y="42.5" width="11.5" height="11" fill="#f0f0ea" stroke="#000" stroke-width="2"/><g stroke="#5a5aa8" fill="none" stroke-width="1.3"><path d="M7 69 V78 M20.5 69 V78 M7 73 H20.5"/></g><circle cx="8" cy="73" r="1" fill="#5a5aa8"/><circle cx="19.5" cy="73" r="1" fill="#5a5aa8"/><circle cx="7" cy="82" r="0.8" fill="#404060"/><circle cx="20.5" cy="82" r="0.8" fill="#404060"/><g stroke="#5a5aa8" fill="none" stroke-width="1.3"><path d="M11 88.5 H20 M11 101 H20 M17 88.5 V101"/></g><circle cx="7.5" cy="88.5" r="0.8" fill="#404060"/><circle cx="7.5" cy="101" r="0.8" fill="#404060"/><g stroke="#101010" fill="none" stroke-width="1.6"><path d="M7 107 V113.5 M20.5 107 V113.5 M7 110 H20.5"/></g><text x="7" y="121" font-family="Liberation Sans" font-weight="bold" font-size="7" fill="#2a3aa0" stroke="#2a3aa0" stroke-width="0.3" textLength="14" lengthAdjust="spacingAndGlyphs">SET</text><path d="M8.5 138.5 H19 V149.5 H11 L8.5 147 Z" fill="#0e7a68" stroke="#0a3030" stroke-width="1.1"/><path d="M13.5 136.5 V143" stroke="#304040" stroke-width="1.2"/><circle cx="13.5" cy="144" r="1.3" fill="#e02020"/><path d="M8.5 147 L11 149.5 L8.5 149.5 Z" fill="#fff"/><path d="M8.5 158.5 H19 V168.5 H11 L8.5 166 Z" fill="#0e7a68" stroke="#0a3030" stroke-width="1.1"/><ellipse cx="14.5" cy="163.5" rx="2.5" ry="1.8" fill="#fff"/><path d="M8.5 177 H19 V188 H11 L8.5 185.5 Z" fill="#0e7a68" stroke="#0a3030" stroke-width="1.1"/><path d="M10 178.5 L18 186.5 M18 178.5 L10 186.5" stroke="#e02020" stroke-width="1.8"/><path d="M14 175 V180" stroke="#4060a0" stroke-width="1"/><rect x="8.5" y="197.5" width="10.5" height="9" fill="#fff" stroke="#000" stroke-width="1.6"/><path d="M10 203.5 Q12 199 14 202 Q16 205 18 200" stroke="#3040b0" stroke-width="1.5" fill="none"/><path d="M688 69 L691.5 73 H689.5 V75 H692 V73 L696 76.5 L692 80 V78 H689.5 V80 H691.5 L688 84 L684.5 80 H686.5 V78 H684 V80 L680 76.5 L684 73 V75 H686.5 V73 H684.5 Z" fill="#20309a"/><path d="M683 105 L694 95" stroke="#505050" stroke-width="1.3"/><circle cx="683" cy="105" r="1.5" fill="#505050"/><circle cx="694" cy="95" r="1.6" fill="#505050"/><path d="M683 126 V121 Q683 116 688 116 H692" stroke="#606060" stroke-width="1.8" fill="none"/><path d="M686 126 V122 Q686 119 689 119 H692" stroke="#606060" stroke-width="1.4" fill="none"/><circle cx="693" cy="115.5" r="1.8" fill="#505050"/><rect x="684.5" y="132.5" width="8" height="11" fill="#fff" stroke="#2a60b0" stroke-width="1.6"/><path d="M681 135 H684 M681 138 H684 M681 141 H684 M693 135 H696 M693 138 H696 M693 141 H696" stroke="#2a60b0" stroke-width="1.2"/><path d="M688 150 L695 155 L695 160 L688 164.5 L681 160 L681 154 Z" fill="#1a2a80"/><path d="M688 153 Q692 158 689 161 Q686 161 686 158 Z" fill="#40c0e0"/><text x="681" y="176" font-family="Liberation Sans" font-size="6.5" fill="#909090" textLength="7" lengthAdjust="spacingAndGlyphs">X1</text><text x="681" y="183" font-family="Liberation Sans" font-size="6.5" fill="#909090" textLength="7" lengthAdjust="spacingAndGlyphs">X2</text><path d="M690 172 L693 175 L690 180" stroke="#909090" stroke-width="1" fill="none"/><text x="681" y="194.5" font-family="Liberation Sans" font-weight="bold" font-size="7" fill="#203090" textLength="8" lengthAdjust="spacingAndGlyphs">R1</text><text x="681" y="201.5" font-family="Liberation Sans" font-weight="bold" font-size="7" fill="#203090" textLength="8" lengthAdjust="spacingAndGlyphs">R2</text><path d="M690 189.5 L694 192 L692 199" stroke="#e02020" stroke-width="1.3" fill="none"/><path d="M690 198 L693 200.5 L694 197 Z" fill="#e02020"/><rect x="681" y="207" width="9" height="8" fill="#2a4ab0" stroke="#102060" stroke-width="1"/><rect x="685" y="211" width="9" height="8.5" fill="#30a050" stroke="#102060" stroke-width="1"/><rect x="686.5" y="212.5" width="6" height="5.5" fill="#4a6ac0"/><path d="M682 240 L695 228 M682 228 L695 240" stroke="#505050" stroke-width="1.4"/><circle cx="694.5" cy="228.5" r="1.6" fill="#404040"/><circle cx="682.5" cy="240" r="1.6" fill="#404040"/><rect x="684" y="247.5" width="9" height="11" fill="#fff" stroke="#2a50b0" stroke-width="1.4"/><path d="M681 250 H684 M681 253 H684 M681 256 H684 M693 250 H696 M693 253 H696 M693 256 H696" stroke="#2a50b0" stroke-width="1.1"/><path d="M685 249 L692 257 M692 249 L685 257" stroke="#e02020" stroke-width="1.6"/><path d="M680 279 H685 M682.5 276.5 V281.5" stroke="#000" stroke-width="1.5"/><circle cx="691" cy="279" r="4.5" fill="#20308a"/><path d="M686.5 279 H695.5 M691 274.5 V283.5" stroke="#8090d0" stroke-width="0.9"/><path d="M680 298 H685 M682.5 295.5 V300.5" stroke="#000" stroke-width="1.5"/><path d="M691 291 V305" stroke="#000" stroke-width="1.8"/><path d="M687.5 294 L691 290.5 L694.5 294 Z M687.5 302 L691 305.5 L694.5 302 Z" fill="#000"/><path d="M680 316 H685 M682.5 313.5 V318.5" stroke="#000" stroke-width="1.5"/><circle cx="691" cy="316" r="4.8" fill="#2050c0"/><circle cx="691" cy="316" r="2.6" fill="#80c8f0"/><text x="681" y="339" font-family="Liberation Serif" font-weight="bold" font-size="13" fill="#5a3aa0" textLength="13" lengthAdjust="spacingAndGlyphs">P</text><text x="680" y="338" font-family="Liberation Serif" font-weight="bold" font-size="13" fill="#40c0d0" textLength="13" lengthAdjust="spacingAndGlyphs">P</text><text x="15" y="487.5" font-family="Liberation Serif" font-weight="bold" font-size="14" fill="#7a1020" stroke="#7a1020" stroke-width="0.5" textLength="12" lengthAdjust="spacingAndGlyphs">A</text><path d="M42.5 477.5 L52.5 485.5" stroke="#000" stroke-width="1.8"/><path d="M63.5 487 V480 Q63.5 477.5 65.5 477.5 Q67.5 477.5 67.5 480 V484 Q67.5 486.5 69.5 486.5 Q71.5 486.5 71.5 484 V480 Q71.5 477.5 73.5 478" stroke="#000" stroke-width="1.8" fill="none"/><path d="M84.5 486.5 V481 H88 V478 Q92 477 94.5 479.5 V486.5 Z" stroke="#000" stroke-width="1.8" fill="none"/><rect x="104.5" y="478" width="12" height="8.5" stroke="#a0a0a0" stroke-width="1.5" fill="none"/><circle cx="131.5" cy="482" r="5.5" stroke="#000" stroke-width="1.6" fill="none"/><circle cx="131.5" cy="482" r="1.5" fill="#000"/><path d="M152 477 H164 M152 487 H164" stroke="#707070" stroke-width="1.5"/><path d="M152 479.5 Q155 482 158 479.5 Q161 482 164 479.5 M152 484.5 Q155 482 158 484.5 Q161 482 164 484.5" stroke="#404040" stroke-width="1.6" fill="none"/><path d="M171.5 477 V487 M186.5 477 V487" stroke="#707070" stroke-width="1.5"/><path d="M174 477 Q177 480 174 482 Q177 484 174 487 M184 477 Q181 480 184 482 Q181 484 184 487" stroke="#404040" stroke-width="1.8" fill="none"/><rect x="194" y="477.5" width="11.5" height="10" fill="#c02020" stroke="#202020" stroke-width="1.4"/><circle cx="197.5" cy="482.5" r="1.2" fill="#fff"/><circle cx="201.5" cy="481" r="1.2" fill="#fff"/><circle cx="201" cy="484.5" r="1" fill="#fff"/><rect x="218.5" y="477.5" width="6" height="10" rx="1" fill="none" stroke="#909090" stroke-width="1.2"/><rect x="220" y="480" width="3" height="2" fill="#909090"/><rect x="220" y="483.5" width="3" height="2" fill="#909090"/><circle cx="451.3" cy="481.3" r="3.8" stroke="#505050" stroke-width="2.2" fill="#fff"/><g fill="#707070"><rect x="469" y="475.5" width="2" height="2"/><rect x="472" y="475.5" width="2" height="2"/><rect x="475" y="476.5" width="2" height="2"/><rect x="466" y="479" width="3" height="1.5"/><rect x="471" y="479" width="3" height="1.5"/><rect x="475.5" y="479" width="3" height="1.5"/></g><path d="M466 483.5 H471 M468.5 481.5 L466 483.5 L468.5 485.5" stroke="#404040" stroke-width="1.4" fill="none"/><g fill="#606060"><rect x="472" y="482" width="2" height="5"/><rect x="475" y="482" width="3.5" height="5"/></g><circle cx="491" cy="479.5" r="3.8" stroke="#404040" stroke-width="1.8" fill="none"/><circle cx="496" cy="483.5" r="3.8" stroke="#404040" stroke-width="1.8" fill="#d8d4cb"/><circle cx="491.5" cy="480" r="1.2" fill="#909090"/></svg>
</body></html>
